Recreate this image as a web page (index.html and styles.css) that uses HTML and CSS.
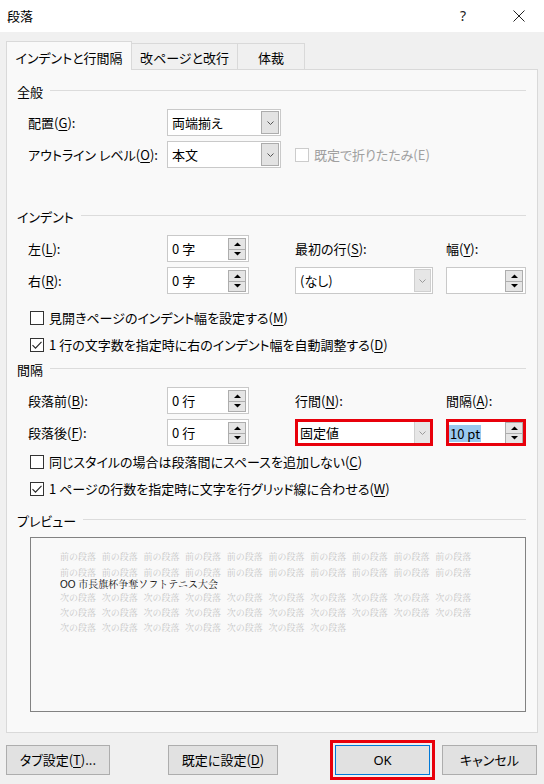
FILE: index.html
```html
<!DOCTYPE html>
<html lang="ja">
<head>
<meta charset="utf-8">
<title>段落</title>
<link rel="stylesheet" href="styles.css">
</head>
<body>
<div class="titlebar">
  <span class="title">段落</span>
  <span class="help">?</span>
  <svg class="close" width="12" height="12" viewBox="0 0 12 12"><path d="M0.5 0.5L11.5 11.5M11.5 0.5L0.5 11.5" stroke="#222" stroke-width="1" fill="none"/></svg>
</div>
<div class="tabs">
  <div class="tab tab-1 active">インデントと行間隔</div>
  <div class="tab tab-2">改ページと改行</div>
  <div class="tab tab-3">体裁</div>
</div>
<div class="panel">
  <div class="ghead"><span>全般</span></div>
  <div class="frow frow-1">
    <span class="lbl">配置(<u>G</u>):</span>
    <div class="combo combo-gen"><span class="val">両端揃え</span><span class="drop"><svg width="7" height="4" viewBox="0 0 7 4"><path d="M0.5 0.5L3.5 3.5L6.5 0.5" fill="none" stroke="#555"/></svg></span></div>
  </div>
  <div class="frow frow-2">
    <span class="lbl">アウトライン レベル(<u>O</u>):</span>
    <div class="combo combo-gen"><span class="val">本文</span><span class="drop"><svg width="7" height="4" viewBox="0 0 7 4"><path d="M0.5 0.5L3.5 3.5L6.5 0.5" fill="none" stroke="#555"/></svg></span></div>
    <div class="chk chk-dis"><span class="box"></span><span>既定で折りたたみ(E)</span></div>
  </div>

  <div class="ghead ghead-indent"><span>インデント</span></div>
  <div class="grid grid-indent">
    <span class="lbl">左(<u>L</u>):</span>
    <div class="spin c2"><span class="val">0 字</span><span class="spinbtns"><span><svg width="7" height="4" viewBox="0 0 7 4"><path d="M0 4L3.5 0.5L7 4Z" fill="#000"/></svg></span><span><svg width="7" height="4" viewBox="0 0 7 4"><path d="M0 0L3.5 3.5L7 0Z" fill="#000"/></svg></span></span></div>
    <span class="lbl c4">最初の行(<u>S</u>):</span>
    <span class="lbl c6">幅(<u>Y</u>):</span>
    <span class="lbl">右(<u>R</u>):</span>
    <div class="spin c2"><span class="val">0 字</span><span class="spinbtns"><span><svg width="7" height="4" viewBox="0 0 7 4"><path d="M0 4L3.5 0.5L7 4Z" fill="#000"/></svg></span><span><svg width="7" height="4" viewBox="0 0 7 4"><path d="M0 0L3.5 3.5L7 0Z" fill="#000"/></svg></span></span></div>
    <div class="combo combo-soft c4"><span class="val">(なし)</span><span class="drop"><svg width="7" height="4" viewBox="0 0 7 4"><path d="M0.5 0.5L3.5 3.5L6.5 0.5" fill="none" stroke="#9a9a9a"/></svg></span></div>
    <div class="spin c6"><span class="val"></span><span class="spinbtns"><span><svg width="7" height="4" viewBox="0 0 7 4"><path d="M0 4L3.5 0.5L7 4Z" fill="#000"/></svg></span><span><svg width="7" height="4" viewBox="0 0 7 4"><path d="M0 0L3.5 3.5L7 0Z" fill="#000"/></svg></span></span></div>
  </div>
  <div class="chk chk-1"><span class="box"></span><span>見開きページのインデント幅を設定する(<u>M</u>)</span></div>
  <div class="chk chk-2"><span class="box"><svg width="12" height="12" viewBox="0 0 12 12"><path d="M1.5 6.2L4.5 9.2L10.5 2.8" fill="none" stroke="#222" stroke-width="1.1"/></svg></span><span>1 行の文字数を指定時に右のインデント幅を自動調整する(<u>D</u>)</span></div>

  <div class="ghead ghead-space"><span>間隔</span></div>
  <div class="grid grid-space">
    <span class="lbl">段落前(<u>B</u>):</span>
    <div class="spin c2"><span class="val">0 行</span><span class="spinbtns"><span><svg width="7" height="4" viewBox="0 0 7 4"><path d="M0 4L3.5 0.5L7 4Z" fill="#000"/></svg></span><span><svg width="7" height="4" viewBox="0 0 7 4"><path d="M0 0L3.5 3.5L7 0Z" fill="#000"/></svg></span></span></div>
    <span class="lbl c4">行間(<u>N</u>):</span>
    <span class="lbl c6">間隔(<u>A</u>):</span>
    <span class="lbl">段落後(<u>F</u>):</span>
    <div class="spin c2"><span class="val">0 行</span><span class="spinbtns"><span><svg width="7" height="4" viewBox="0 0 7 4"><path d="M0 4L3.5 0.5L7 4Z" fill="#000"/></svg></span><span><svg width="7" height="4" viewBox="0 0 7 4"><path d="M0 0L3.5 3.5L7 0Z" fill="#000"/></svg></span></span></div>
    <div class="combo combo-soft c4 hl"><span class="val">固定値</span><span class="drop"><svg width="7" height="4" viewBox="0 0 7 4"><path d="M0.5 0.5L3.5 3.5L6.5 0.5" fill="none" stroke="#9a9a9a"/></svg></span></div>
    <div class="spin c6 hl"><span class="val"><span class="sel">10 pt</span></span><span class="spinbtns"><span><svg width="7" height="4" viewBox="0 0 7 4"><path d="M0 4L3.5 0.5L7 4Z" fill="#000"/></svg></span><span><svg width="7" height="4" viewBox="0 0 7 4"><path d="M0 0L3.5 3.5L7 0Z" fill="#000"/></svg></span></span></div>
  </div>
  <div class="chk chk-3"><span class="box"></span><span>同じスタイルの場合は段落間にスペースを追加しない(<u>C</u>)</span></div>
  <div class="chk chk-4"><span class="box"><svg width="12" height="12" viewBox="0 0 12 12"><path d="M1.5 6.2L4.5 9.2L10.5 2.8" fill="none" stroke="#222" stroke-width="1.1"/></svg></span><span>1 ページの行数を指定時に文字を行グリッド線に合わせる(<u>W</u>)</span></div>

  <div class="ghead ghead-preview"><span>プレビュー</span></div>
  <div class="preview">
    <div class="pv-gray pv-prev"><span>前の段落</span><span>前の段落</span><span>前の段落</span><span>前の段落</span><span>前の段落</span><span>前の段落</span><span>前の段落</span><span>前の段落</span><span>前の段落</span><span>前の段落</span><span>前の段落</span><span>前の段落</span><span>前の段落</span><span>前の段落</span><span>前の段落</span><span>前の段落</span><span>前の段落</span><span>前の段落</span><span>前の段落</span><span>前の段落</span></div>
    <div class="pv-main">OO 市長旗杯争奪ソフトテニス大会</div>
    <div class="pv-gray pv-next"><span>次の段落</span><span>次の段落</span><span>次の段落</span><span>次の段落</span><span>次の段落</span><span>次の段落</span><span>次の段落</span><span>次の段落</span><span>次の段落</span><span>次の段落</span><span>次の段落</span><span>次の段落</span><span>次の段落</span><span>次の段落</span><span>次の段落</span><span>次の段落</span><span>次の段落</span><span>次の段落</span><span>次の段落</span><span>次の段落</span><span>次の段落</span><span>次の段落</span><span>次の段落</span><span>次の段落</span><span>次の段落</span><span>次の段落</span><span>次の段落</span></div>
  </div>
</div>
<div class="footer">
  <div class="btn btn-tab">タブ設定(<u>T</u>)...</div>
  <div class="btn btn-def">既定に設定(<u>D</u>)</div>
  <div class="btn btn-ok hl-ok">OK</div>
  <div class="btn btn-cancel">キャンセル</div>
</div>
</body>
</html>
```
FILE: styles.css
```css
*{box-sizing:border-box}
html,body{margin:0;padding:0}
body{width:544px;height:784px;overflow:hidden;background:#f0f0f0;color:#000;
  font-family:"Noto Sans CJK JP","Noto Sans",sans-serif;font-size:13px;line-height:18px;
  font-feature-settings:"palt"}
u{text-decoration:underline;text-underline-offset:2px;text-decoration-thickness:1px}

.titlebar{height:32px;background:#fff;display:flex;align-items:center;padding:0 19px 0 7px}
.title{flex:1}
.help{width:10px;text-align:center;margin-right:45px;font-size:14px;color:#222;font-family:"Noto Sans",sans-serif}
.close{display:block}

.tabs{display:flex;align-items:flex-end;height:37px;padding-left:6px}
.tab{height:26px;padding-top:5px;text-align:center;background:#f0f0f0;border:1px solid #d9d9d9;border-bottom:none;margin-left:-1px;white-space:nowrap}
.tab-1{width:126px;margin-left:0}
.tab-2{width:107px}
.tab-3{width:68px}
.tab.active{height:29px;padding-top:7px;background:#f9f9f9;margin-bottom:-1px;position:relative;z-index:1}

.panel{margin:0 6px;height:664px;border:1px solid #d9d9d9;background:#f9f9f9;padding:14px 11px 0 10px}

.ghead{display:flex;align-items:center;height:16px;line-height:16px}
.ghead::after{content:"";flex:1;height:1px;background:#dcdcdc;margin:-3px 0 0 7px}
.ghead-indent{margin-top:41px}
.ghead-space{margin-top:9px}
.ghead-preview{margin-top:16px}

.lbl{white-space:nowrap}

.frow{display:flex;align-items:center;height:27px;padding-left:11px}
.frow .lbl{width:139px}
.frow-1{margin-top:9px}
.frow-2{margin-top:5px}

.combo{display:flex;height:27px;border:1px solid #c9c9c9;background:#fff;padding:1px}
.combo .val{flex:1;padding-left:3px;display:flex;align-items:center;white-space:nowrap}
.combo .drop{width:18px;background:#e3e3e3;border:1px solid #acacac;display:flex;align-items:center;justify-content:center}
.combo-soft .drop{width:17px;background:#e6e6e6;border-color:#cfcfcf}
.combo-gen{width:114px}

.grid{display:grid;grid-template-columns:139px 82px 46px 138px 13px 80px;grid-auto-rows:27px;row-gap:5px;padding-left:11px;align-items:center}
.grid > .combo,.grid > .spin{align-self:stretch}
.grid-indent{margin-top:10px}
.grid-space{margin-top:9px}
.c2{grid-column:2}
.c4{grid-column:4}
.c6{grid-column:6}

.spin{display:flex;height:27px;border:1px solid #c9c9c9;background:#fff;padding:2px 2px 1px 0}
.spin .val{flex:1;padding-left:4px;display:flex;align-items:center;white-space:nowrap}
.spinbtns{width:18px;display:flex;flex-direction:column}
.spinbtns span{flex:1;background:#e5e5e5;border:1px solid #adadad;display:flex;align-items:center;justify-content:center}
.spinbtns span + span{border-top:none}
.spinbtns svg{display:block}
.sel{background:#99c9ef;padding:0 1px;margin-left:-2px;line-height:17px}

.chk{display:flex;align-items:center;height:16px;padding-left:13px;white-space:nowrap}
.box{width:14px;height:14px;flex:none;border:1px solid #333;background:#fff;margin-right:5px;display:flex;align-items:center;justify-content:center}
.box svg{display:block}
.chk-dis{margin-left:14px;padding-left:0;color:#a0a0a0}
.chk-dis .box{border-color:#cccccc}
.chk-1{margin-top:16px}
.chk-2{margin-top:11px}
.chk-3{margin-top:8px}
.chk-4{margin-top:11px}

.hl{position:relative}
.hl::after{content:"";position:absolute;inset:-1px;border:3px solid #e8000b;pointer-events:none}

.preview{margin:8px 0 0 13px;height:175px;border:1px solid #828282;background:#f9f9f9;padding:11px 0 0 29px;
  font-family:"Liberation Sans","Noto Serif CJK JP","Noto Sans CJK JP",sans-serif;font-feature-settings:normal}
.pv-gray{width:420px;display:flex;flex-wrap:wrap;color:#c6c6c6;font-size:9px;line-height:16px}
.pv-gray span{width:41.7px;white-space:nowrap}
.pv-main{font-size:10px;line-height:7px;color:#141414;white-space:nowrap}
.pv-next{line-height:15px;margin-top:2.5px}

.footer{display:flex;padding:12px 0 0 6px}
.btn{height:30px;background:#e1e1e1;border:1px solid #adadad;display:flex;align-items:center;justify-content:center;white-space:nowrap}
.btn-tab{width:104px}
.btn-def{width:110px;margin-left:58px}
.btn-ok{width:95px;margin-left:57px;border-color:#0078d7;font-family:"Noto Sans",sans-serif}
.btn-cancel{width:95px;margin-left:12px}
.hl-ok{position:relative}
.hl-ok::after{content:"";position:absolute;inset:-6px;border:3px solid #e8000b;pointer-events:none}
```
